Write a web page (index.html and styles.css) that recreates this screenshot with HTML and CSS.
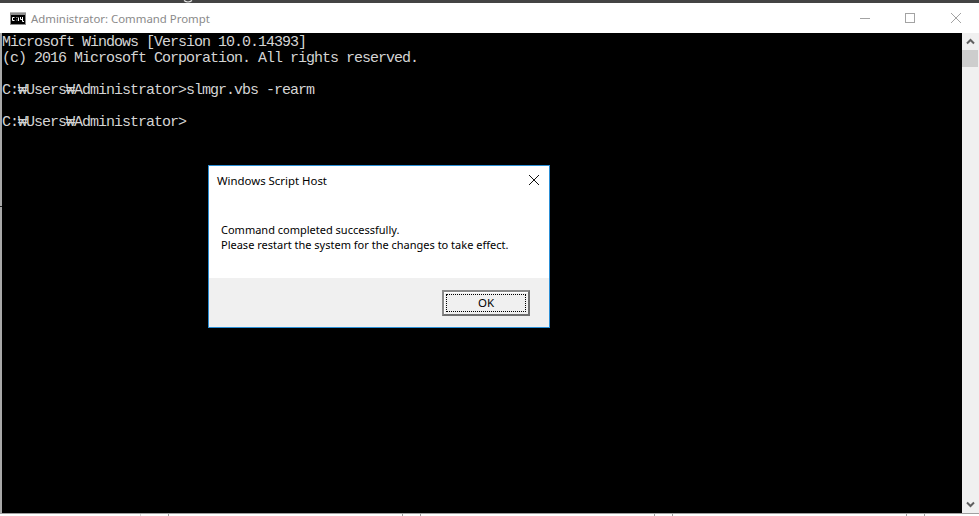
FILE: index.html
```html
<!DOCTYPE html>
<html lang="en">
<head>
<meta charset="utf-8">
<title>Administrator: Command Prompt</title>
<link rel="stylesheet" href="styles.css">
</head>
<body>
<div class="screen">
  <div class="backdrop-top">
    <svg class="behind-glyph" width="10" height="3" viewBox="0 0 10 3"><path d="M1 0.500Q5 3.500 9 0.500" stroke="#e8e8e8" stroke-width="1.200" fill="none"/></svg>
  </div>
  <div class="window">
    <header class="titlebar">
      <svg class="app-icon" width="16" height="13" viewBox="0 0 16 13">
        <rect x="0" y="0" width="16" height="13" fill="#8c8c8c"/>
        <rect x="0" y="0" width="16" height="1" fill="#b5b5b5"/>
        <rect x="1" y="3" width="14" height="9" fill="#000"/>
        <path d="M2.500 5.500h2M2.500 5.500v3M2.500 8.500h2M6.500 5.500h.8M6.500 8h.8M8.500 9V5.500M10.500 5v2.500h2.500M12.500 5v4.500h1.500" stroke="#fff" stroke-width="1" fill="none"/>
      </svg>
      <span class="title">Administrator: Command Prompt</span>
      <div class="controls">
        <svg width="12" height="12" viewBox="0 0 12 12" class="ctl ctl-min"><path d="M1 6.500H11" stroke="#a3a3a3" fill="none"/></svg>
        <svg width="12" height="12" viewBox="0 0 12 12" class="ctl ctl-max"><rect x="1.500" y="1.500" width="9" height="9" stroke="#a3a3a3" fill="none"/></svg>
        <svg width="12" height="12" viewBox="0 0 12 12" class="ctl ctl-close"><path d="M1 1L11 11M11 1L1 11" stroke="#a3a3a3" fill="none"/></svg>
      </div>
    </header>
    <div class="body">
      <pre class="console">Microsoft Windows [Version 10.0.14393]
(c) 2016 Microsoft Corporation. All rights reserved.

C:₩Users₩Administrator&gt;slmgr.vbs -rearm

C:₩Users₩Administrator&gt;</pre>
      <div class="scrollbar">
        <svg width="17" height="17" viewBox="0 0 17 17"><path d="M5 10.500L8.500 7L12 10.500" stroke="#606060" stroke-width="2" fill="none"/></svg>
        <div class="thumb"></div>
        <div class="track"></div>
        <svg width="17" height="17" viewBox="0 0 17 17"><path d="M5 6.500L8.500 10L12 6.500" stroke="#606060" stroke-width="2" fill="none"/></svg>
      </div>
      <section class="dialog">
        <div class="dialog-main">
          <div class="dialog-head">
            <span>Windows Script Host</span>
            <svg class="dialog-close" width="12" height="12" viewBox="0 0 12 12"><path d="M1 1L11 11M11 1L1 11" stroke="#111" fill="none"/></svg>
          </div>
          <p class="message">Command completed successfully.<br>Please restart the system for the changes to take effect.</p>
        </div>
        <div class="dialog-foot">
          <button class="ok"><span class="ok-focus">OK</span></button>
        </div>
      </section>
    </div>
  </div>
  <div class="backdrop-bottom">
    <i class="tick tick-a"></i><i class="tick tick-b"></i><i class="tick tick-c"></i><i class="tick tick-d"></i><i class="tick tick-e"></i><i class="tick tick-f"></i><i class="tick tick-g"></i><i class="tick tick-h"></i>
  </div>
  <i class="edge-tick"></i>
</div>
</body>
</html>
```

FILE: styles.css
```css
* { box-sizing: border-box; }
html, body { margin: 0; padding: 0; background: #fff; }
.screen {
  position: relative;
  width: 979px;
  height: 516px;
  overflow: hidden;
  display: flex;
  flex-direction: column;
  font-family: "Noto Sans", "Open Sans", sans-serif;
}
.backdrop-top { height: 3px; background: #444; flex: none; position: relative; }
.behind-glyph { position: absolute; left: 183px; top: 0; display: block; }
.edge-tick { position: absolute; left: 0; top: 206px; width: 2px; height: 1px; background: #222; }
.window {
  flex: none;
  height: 510px;
  display: flex;
  flex-direction: column;
  border-left: 2px solid #a8a8a8;
  background: #fff;
}
.titlebar {
  height: 30px;
  flex: none;
  display: flex;
  align-items: center;
  background: #fff;
  padding-left: 8px;
  margin-left: -2px;
}
.app-icon { margin-left: 2px; margin-right: 5px; flex: none; }
.title { font-size: 11.4px; color: #8a8a8a; white-space: nowrap; }
.controls { margin-left: auto; display: flex; align-items: center; }
.ctl { flex: none; margin-right: 33px; }
.ctl-max { margin-right: 34px; }
.ctl-close { margin-right: 17px; }
.body { flex: 1; display: flex; position: relative; min-height: 0; }
.console {
  flex: 1;
  margin: 0;
  padding-top: 2px;
  background: #000;
  color: #d4d4d4;
  font-family: "Liberation Mono", "DejaVu Sans Mono", monospace;
  font-size: 15px;
  letter-spacing: -1px;
  line-height: 16px;
}
.scrollbar {
  width: 17px;
  flex: none;
  display: flex;
  flex-direction: column;
  background: #f0f0f0;
}
.scrollbar svg { flex: none; display: block; }
.thumb { height: 17px; background: #cdcdcd; flex: none; margin-right: 1px; }
.track { flex: 1; }
.dialog {
  position: absolute;
  left: 206px;
  top: 132px;
  width: 342px;
  height: 163px;
  border: 1px solid #2b8fd6;
  background: #fff;
  display: flex;
  flex-direction: column;
}
.dialog-main { flex: 1; padding: 7px 9px 0 8px; }
.dialog-head {
  display: flex;
  justify-content: space-between;
  align-items: center;
  font-size: 11.4px;
  color: #000;
}
.dialog-close { margin-bottom: 2px; }
.message {
  margin: 34px 0 0 4px;
  font-size: 11px;
  line-height: 15px;
  color: #000;
}
.dialog-foot {
  height: 49px;
  flex: none;
  background: #f0f0f0;
  display: flex;
  justify-content: flex-end;
  align-items: flex-start;
  padding: 12px 19px 0 0;
}
.ok {
  width: 88px;
  height: 26px;
  padding: 2px;
  margin: 0;
  background: #f0f0f0;
  border: 2px solid;
  border-color: #8a8a8a #707070 #707070 #8a8a8a;
  box-shadow: inset 1px 1px 0 #fff;
  font: 11.5px "Noto Sans", sans-serif;
  color: #000;
  display: flex;
}
.ok-focus {
  flex: 1;
  border: 1px dotted #000;
  display: flex;
  align-items: center;
  justify-content: center;
  padding-bottom: 1px;
}
.backdrop-bottom {
  flex: 1;
  position: relative;
  background: #fff;
  border-top: 1px solid #a0a0a0;
}
.tick { position: absolute; top: 0; bottom: 0; width: 1px; background: #a0a0a0; }
.tick-a { left: 140px; background: #d8d8d8; }
.tick-b { left: 168px; }
.tick-c { left: 402px; }
.tick-d { left: 420px; }
.tick-e { left: 654px; }
.tick-f { left: 672px; }
.tick-g { left: 906px; }
.tick-h { left: 924px; }
```
